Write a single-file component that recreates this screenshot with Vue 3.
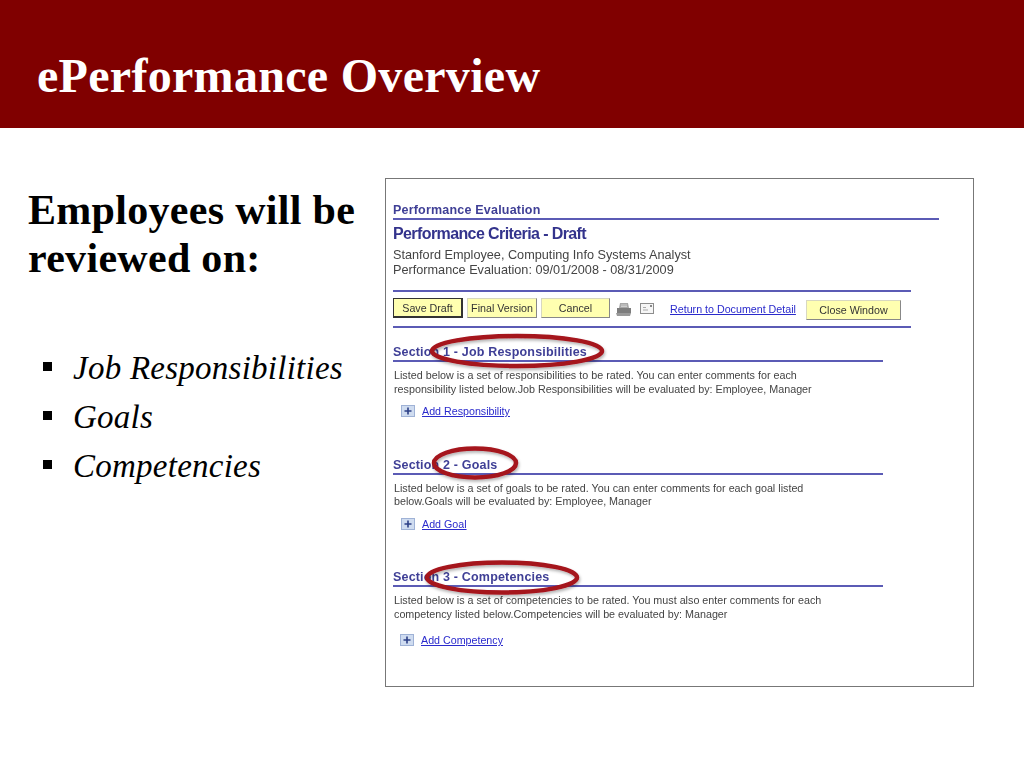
<script setup>
const sections = [
  { title: 'Section 1 - Job Responsibilities', lines: ['Listed below is a set of responsibilities to be rated. You can enter comments for each', 'responsibility listed below.Job Responsibilities will be evaluated by: Employee, Manager'], add: 'Add Responsibility' },
  { title: 'Section 2 - Goals', lines: ['Listed below is a set of goals to be rated. You can enter comments for each goal listed', 'below.Goals will be evaluated by: Employee, Manager'], add: 'Add Goal' },
  { title: 'Section 3 - Competencies', lines: ['Listed below is a set of competencies to be rated. You must also enter comments for each', 'competency listed below.Competencies will be evaluated by: Manager'], add: 'Add Competency' },
]
const ovals = [
  { cx: 517, cy: 351, rx: 85, ry: 15 },
  { cx: 475, cy: 463, rx: 41, ry: 14.5 },
  { cx: 502, cy: 577.5, rx: 75, ry: 15 },
]
const items = ['Job Responsibilities', 'Goals', 'Competencies']
</script>

<template>
  <div class="slide">
    <header class="banner"><h1>ePerformance Overview</h1></header>
    <main class="content">
      <section class="left">
        <h2>Employees will be<br />reviewed on:</h2>
        <ul>
          <li v-for="item in items" :key="item"><span class="sq"></span><em>{{ item }}</em></li>
        </ul>
      </section>
      <section class="panel">
        <div class="shot">
          <div class="crumb">Performance Evaluation</div>
          <div class="main-title">Performance Criteria - Draft</div>
          <p class="who">Stanford Employee, Computing Info Systems Analyst<br />Performance Evaluation: 09/01/2008 - 08/31/2009</p>
          <div class="toolbar">
            <button class="btn save">Save Draft</button>
            <button class="btn final">Final Version</button>
            <button class="btn cancel">Cancel</button>
            <svg class="printer" width="17" height="15" viewBox="0 0 17 15">
              <path d="M5 1h8l1 5H4z" fill="#a8a8a8" />
              <path d="M2 6h14v5H2z" fill="#7d7d7d" />
              <path d="M1 11h15l-1 3H2z" fill="#9a9a9a" />
              <path d="M6 3h6M6 4.500h6" stroke="#e0e0e0" stroke-width=".7" />
            </svg>
            <svg class="mail" width="14" height="12" viewBox="0 0 14 12">
              <rect x=".5" y=".5" width="13" height="10" fill="#f6f6f6" stroke="#8d8d8d" />
              <path d="M3 7h5M3 4.500h3" stroke="#aaa" />
              <rect x="10" y="2" width="2" height="2" fill="#888" />
            </svg>
            <a class="link doc">Return to Document Detail</a>
            <button class="btn close">Close Window</button>
          </div>
          <div v-for="s in sections" :key="s.title" class="sec">
            <div class="sec-title">{{ s.title }}</div>
            <p class="desc"><template v-for="l in s.lines" :key="l">{{ l }}<br /></template></p>
            <div class="add">
              <svg width="14" height="12" viewBox="0 0 14 12">
                <rect x=".5" y=".5" width="13" height="11" fill="#cfdcf0" stroke="#9fb2d6" />
                <path d="M7 2.500v7M3.500 6h7" stroke="#2c3f86" stroke-width="1.600" />
              </svg>
              <a class="link">{{ s.add }}</a>
            </div>
          </div>
        </div>
        <svg class="ovals" width="1024" height="768" viewBox="0 0 1024 768">
          <defs>
            <filter id="sh" x="-10%" y="-30%" width="120%" height="170%">
              <feDropShadow dx="1" dy="2" stdDeviation="1.500" flood-color="#000" flood-opacity=".3" />
            </filter>
          </defs>
          <ellipse v-for="o in ovals" :key="o.cx" :cx="o.cx" :cy="o.cy" :rx="o.rx" :ry="o.ry" fill="none" stroke="#a5121c" stroke-width="4.500" filter="url(#sh)" />
        </svg>
      </section>
    </main>
  </div>
</template>

<style>
html, body { margin: 0; background: #fff; }
</style>

<style scoped>
.slide { width: 1024px; height: 768px; overflow: hidden; background: #fff; position: relative; }
.banner { height: 128px; background: #800000; padding: 48px 0 0 37px; box-sizing: border-box; }
h1 { margin: 0; font: bold 48px/56px "Liberation Serif", serif; color: #fff; letter-spacing: .3px; }
.content { display: flex; align-items: flex-start; }
.left { width: 385px; flex: none; padding: 58px 0 0 28px; box-sizing: border-box; }
h2 { margin: 0; font: bold 42px/48px "Liberation Serif", serif; letter-spacing: .3px; color: #000; }
ul { list-style: none; margin: 62px 0 0; padding: 0 0 0 15px; }
li { display: flex; align-items: center; height: 49px; font: italic 33px "Liberation Serif", serif; letter-spacing: .25px; color: #000; }
.sq { width: 9px; height: 9px; background: #000; margin-right: 21px; flex: none; margin-top: -4px; }
.panel { margin-top: 50px; width: 589px; height: 509px; box-sizing: border-box; border: 1px solid #777; background: #fff; font-family: "Liberation Sans", sans-serif; }
.shot { filter: blur(.45px); padding: 23px 0 0 7px; }
.crumb { width: 546px; height: 16px; border-bottom: 2px solid #5b5bb5; font: bold 12.500px/16px "Liberation Sans", sans-serif; letter-spacing: .2px; color: #3f3f96; }
.main-title { font: bold 16px/20px "Liberation Sans", sans-serif; letter-spacing: -.6px; color: #33338c; margin-top: 4px; }
.who { margin: 4px 0 0; font-size: 12.700px; letter-spacing: 0; line-height: 15px; color: #444; }
.toolbar { width: 518px; height: 34px; margin: 12px 0 16px; border-top: 2px solid #5b5bb5; border-bottom: 2px solid #5b5bb5; display: flex; align-items: center; }
.btn { height: 20px; padding: 0; box-sizing: border-box; background: #ffffb0; border: 1px solid #d8d8c0; border-right-color: #888; border-bottom-color: #888; font: 10.700px "Liberation Sans", sans-serif; color: #333; margin-top: -2px; flex: none; }
.save { width: 70px; border: 1px solid #333; border-right-width: 2px; border-bottom-width: 2px; }
.final { width: 70px; margin-left: 4px; }
.cancel { width: 69px; margin-left: 4px; }
.printer { margin-left: 5px; }
.mail { margin-left: 8px; }
.link { color: #2a2acc; text-decoration: underline; font-size: 10.700px; }
.doc { margin-left: 16px; width: 126px; white-space: nowrap; }
.close { width: 95px; margin-left: 10px; margin-top: 1px; }
.sec { width: 490px; height: 112.500px; }
.sec-title { height: 16px; border-bottom: 2px solid #5b5bb5; font: bold 12.500px/16px "Liberation Sans", sans-serif; letter-spacing: .18px; color: #3f3f96; }
.desc { margin: 7px 0 0 1px; font-size: 10.760px; line-height: 13.500px; color: #444; white-space: nowrap; }
.add { display: flex; align-items: center; gap: 7px; margin: 9px 0 0 8px; }
.sec:last-child .add { margin-top: 13px; margin-left: 7px; }
.ovals { position: absolute; left: 0; top: 0; pointer-events: none; }
</style>
